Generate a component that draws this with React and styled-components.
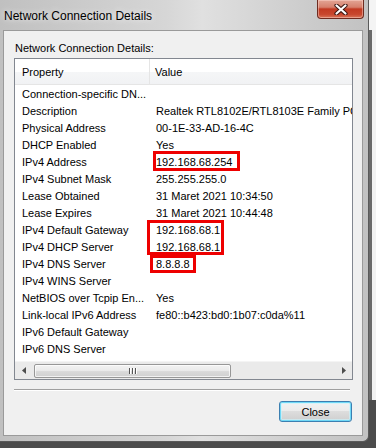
import React from "react";
import styled, { createGlobalStyle } from "styled-components";

const GlobalStyle = createGlobalStyle`
  html, body {
    margin: 0;
    padding: 0;
    background: #4c4c4c;
  }
  body {
    font-family: "Liberation Sans", Arial, sans-serif;
    font-size: 11px;
    color: #000;
  }
`;

const Screen = styled.div`
  width: 376px;
  height: 448px;
  display: flex;
  overflow: hidden;
  background: #4c4c4c;
`;

const Window = styled.div`
  width: 369px;
  height: 442px;
  flex-shrink: 0;
  display: flex;
  flex-direction: column;
  box-sizing: border-box;
  background: linear-gradient(to right, #c0c0c0 0%, #d6d6d6 45%, #e0e0e0 55%, #cbcbcb 85%, #c2c2c2 100%);
  border-right: 1px solid #5a5a5a;
  border-bottom: 1px solid #5a5a5a;
  border-bottom-right-radius: 6px;
  padding: 0 5px 5px 3px;
`;

const TitleBar = styled.div`
  height: 30px;
  display: flex;
  align-items: flex-start;
  justify-content: space-between;
  flex-shrink: 0;
`;

const Title = styled.span`
  font-size: 12px;
  line-height: 14px;
  margin-top: 9px;
  margin-left: 1px;
  color: #000;
  text-shadow: 0 0 6px rgba(255, 255, 255, 0.9);
`;

const CloseX = styled.div`
  width: 47px;
  height: 19px;
  margin-right: -1px;
  box-sizing: border-box;
  border: 1px solid #6e2b20;
  border-top: none;
  border-radius: 0 0 4px 4px;
  background: linear-gradient(to bottom, #e3a595 0%, #d6806c 40%, #c23a22 50%, #c8472e 80%, #d8765a 100%);
  box-shadow: inset 0 0 0 1px rgba(255, 220, 210, 0.45);
  display: flex;
  align-items: center;
  justify-content: center;
`;

const Client = styled.div`
  flex: 1;
  box-sizing: border-box;
  border: 1px solid #9a9a9a;
  background: #f0f0f0;
  padding: 10px 9px 0 10px;
  display: flex;
  flex-direction: column;
`;

const Caption = styled.div`
  line-height: 14px;
  padding-left: 1px;
`;

const ListBox = styled.div`
  margin-top: 3px;
  height: 322px;
  box-sizing: border-box;
  border: 1px solid #828790;
  background: #fff;
  display: flex;
  flex-direction: column;
  overflow: hidden;
`;

const HeaderRow = styled.div`
  height: 25px;
  flex-shrink: 0;
  display: flex;
  border-bottom: 1px solid #e5e5e5;
  background: linear-gradient(to bottom, #ffffff 0%, #ffffff 50%, #f5f6f7 51%, #f1f2f4 100%);
`;

const HeadCell = styled.div`
  width: ${(p) => p.$w || "auto"};
  flex: ${(p) => (p.$w ? "none" : "1")};
  box-sizing: border-box;
  display: flex;
  align-items: center;
  padding-left: ${(p) => p.$pad}px;
  border-right: ${(p) => (p.$divider ? "1px solid #e5e5e5" : "none")};
`;

const Body = styled.div`
  flex: 1;
  position: relative;
  overflow: hidden;
`;

const Row = styled.div`
  height: 17px;
  display: flex;
  align-items: center;
  white-space: nowrap;
`;

const Cell = styled.div`
  width: ${(p) => p.$w || "auto"};
  flex: ${(p) => (p.$w ? "none" : "1")};
  box-sizing: border-box;
  padding-left: ${(p) => p.$pad}px;
  overflow: hidden;
  white-space: nowrap;
`;

const Mark = styled.div`
  position: absolute;
  left: ${(p) => p.$x}px;
  top: ${(p) => p.$y}px;
  width: ${(p) => p.$w}px;
  height: ${(p) => p.$h}px;
  box-sizing: border-box;
  border: 3px solid #ee0000;
  pointer-events: none;
`;

const ScrollBar = styled.div`
  height: 17px;
  flex-shrink: 0;
  display: flex;
  align-items: center;
  background: #eaeaea;
  border-top: 1px solid #f4f4f4;
`;

const Arrow = styled.div`
  width: 17px;
  height: 17px;
  display: flex;
  align-items: center;
  justify-content: center;
`;

const Track = styled.div`
  flex: 1;
  display: flex;
  height: 100%;
  align-items: center;
  padding: 0 2px;
`;

const Thumb = styled.div`
  width: 197px;
  height: 14px;
  box-sizing: border-box;
  border: 1px solid #979797;
  border-radius: 2px;
  background: linear-gradient(to bottom, #f2f2f2 0%, #ebebeb 45%, #d9d9d9 55%, #d0d0d0 100%);
  box-shadow: inset 0 0 0 1px rgba(255, 255, 255, 0.7);
  display: flex;
  align-items: center;
  justify-content: center;
  gap: 1px;
`;

const Grip = styled.span`
  width: 1px;
  height: 6px;
  background: #555;
  box-shadow: 1px 0 0 #fff;
  margin-right: 1px;
`;

const Separator = styled.div`
  margin-top: 9px;
  width: 336px;
  height: 1px;
  background: #a0a0a0;
  box-shadow: 0 1px 0 #fff;
`;

const Footer = styled.div`
  display: flex;
  justify-content: flex-end;
  margin-top: 11px;
  padding-right: 1px;
`;

const Button = styled.button`
  width: 73px;
  height: 21px;
  box-sizing: border-box;
  font-family: "Liberation Sans", Arial, sans-serif;
  font-size: 11px;
  color: #000;
  border: 1px solid #3c7fb1;
  border-radius: 3px;
  background: linear-gradient(to bottom, #f2f2f2 0%, #ebebeb 49%, #dddddd 50%, #cfcfcf 100%);
  box-shadow: inset 0 0 0 1px #6fd8f6, inset 0 0 0 2px rgba(200, 245, 255, 0.6);
  padding: 0;
`;

const Side = styled.div`
  flex: 1;
  height: 448px;
  display: flex;
  flex-direction: column;
`;

const SideTop = styled.div`
  height: 30px;
  background: #f4f4f4;
`;

const SideMid = styled.div`
  flex: 1;
  background: #f2f2f2;
  border-left: 3px solid #6a6a6a;
`;

const SideBottom = styled.div`
  height: 48px;
  background: #4c4c4c;
`;

const rows = [
  ["Connection-specific DN...", ""],
  ["Description", "Realtek RTL8102E/RTL8103E Family PCI-E Fast Ethernet NIC (NDIS 6.20)"],
  ["Physical Address", "00-1E-33-AD-16-4C"],
  ["DHCP Enabled", "Yes"],
  ["IPv4 Address", "192.168.68.254"],
  ["IPv4 Subnet Mask", "255.255.255.0"],
  ["Lease Obtained", "31 Maret 2021 10:34:50"],
  ["Lease Expires", "31 Maret 2021 10:44:48"],
  ["IPv4 Default Gateway", "192.168.68.1"],
  ["IPv4 DHCP Server", "192.168.68.1"],
  ["IPv4 DNS Server", "8.8.8.8"],
  ["IPv4 WINS Server", ""],
  ["NetBIOS over Tcpip En...", "Yes"],
  ["Link-local IPv6 Address", "fe80::b423:bd0:1b07:c0da%11"],
  ["IPv6 Default Gateway", ""],
  ["IPv6 DNS Server", ""],
];

const marks = [
  { x: 138, y: 66, w: 87, h: 20 },
  { x: 132, y: 135, w: 77, h: 35 },
  { x: 135, y: 170, w: 46, h: 18 },
];

export default function App() {
  return (
    <>
      <GlobalStyle />
      <Screen>
        <Window>
          <TitleBar>
            <Title>Network Connection Details</Title>
            <CloseX>
              <svg width="14" height="11" viewBox="0 0 14 11">
                <path d="M2.5 1.5 L11.5 9.5 M11.5 1.5 L2.5 9.5" stroke="#3a1510" strokeWidth="4.2" strokeLinecap="round" />
                <path d="M2.5 1.5 L11.5 9.5 M11.5 1.5 L2.5 9.5" stroke="#ffffff" strokeWidth="2.2" strokeLinecap="round" />
              </svg>
            </CloseX>
          </TitleBar>
          <Client>
            <Caption>Network Connection Details:</Caption>
            <ListBox>
              <HeaderRow>
                <HeadCell $w="135px" $pad={7} $divider>Property</HeadCell>
                <HeadCell $pad={5}>Value</HeadCell>
              </HeaderRow>
              <Body>
                {rows.map(([k, v]) => (
                  <Row key={k}>
                    <Cell $w="136px" $pad={7}>{k}</Cell>
                    <Cell $pad={5}>{v}</Cell>
                  </Row>
                ))}
                {marks.map((m, i) => (
                  <Mark key={i} $x={m.x} $y={m.y} $w={m.w} $h={m.h} />
                ))}
              </Body>
              <ScrollBar>
                <Arrow>
                  <svg width="4" height="7" viewBox="0 0 4 7">
                    <path d="M4 0 L0 3.5 L4 7 Z" fill="#4d4d4d" />
                  </svg>
                </Arrow>
                <Track>
                  <Thumb>
                    <Grip />
                    <Grip />
                    <Grip />
                  </Thumb>
                </Track>
                <Arrow>
                  <svg width="4" height="7" viewBox="0 0 4 7">
                    <path d="M0 0 L4 3.5 L0 7 Z" fill="#4d4d4d" />
                  </svg>
                </Arrow>
              </ScrollBar>
            </ListBox>
            <Separator />
            <Footer>
              <Button>Close</Button>
            </Footer>
          </Client>
        </Window>
        <Side>
          <SideTop />
          <SideMid />
          <SideBottom />
        </Side>
      </Screen>
    </>
  );
}
